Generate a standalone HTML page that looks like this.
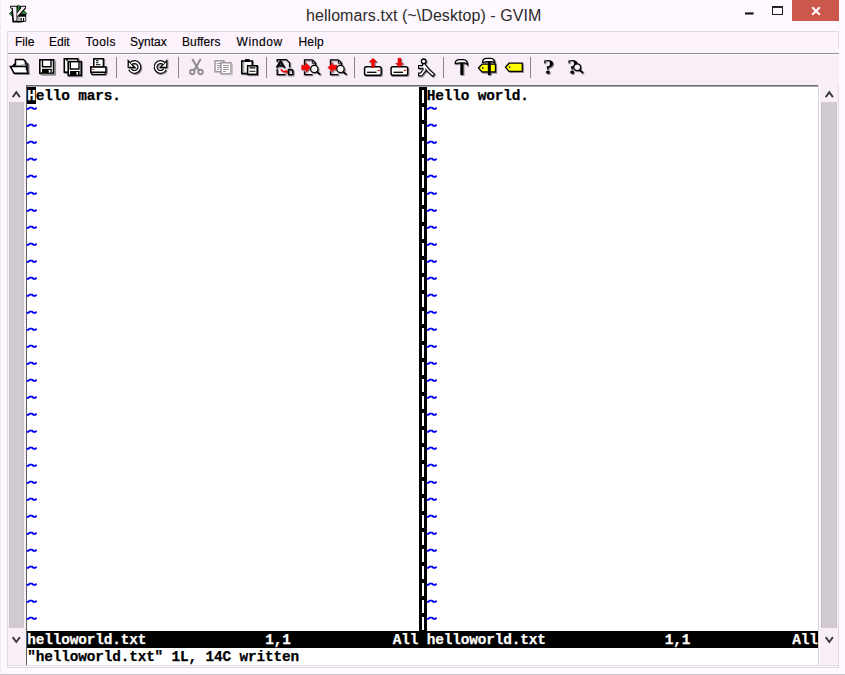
<!DOCTYPE html><html><head><meta charset="utf-8"><style>
*{margin:0;padding:0;box-sizing:border-box}
html,body{width:845px;height:675px;overflow:hidden;background:#fff8ff;position:relative;font-family:"Liberation Sans",sans-serif}
.a{position:absolute}
.m{position:absolute;font-family:"Liberation Mono",monospace;font-weight:bold;font-size:14.4px;letter-spacing:-0.14px;line-height:17px;white-space:pre;color:#000;-webkit-text-stroke:0.25px currentColor}
.menu span{position:absolute;top:35px;font-size:12px;line-height:14px;color:#000;-webkit-text-stroke:0.15px #000}
</style></head><body>
<div class="a" style="left:0;top:0;width:1px;height:675px;background:#f3edf3"></div>
<svg class="a" style="left:0;top:0" width="32" height="28" viewBox="0 0 32 28">
<polygon points="18.6,5 26.8,13.6 18.6,22.6 9.3,13.6" fill="#2c7a31" stroke="#123d16" stroke-width="0.7"/>
<polygon points="10.2,5.8 17.8,5.8 17.8,8.4 17.2,8.4 17.2,12.2 19.8,8.4 19.8,5.8 26,5.8 26,8.4 20.5,14 26.2,14 26.2,21.4 21,22.6 12.4,22.6 11.6,8.4 10.2,8.4" fill="#000"/>
<polygon points="11,6.7 16.5,6.7 16.5,20.8 14,20.8 12.7,7.7 11,7.7" fill="#f5f0f5"/>
<polygon points="20.9,6.7 25.2,6.7 25.2,7.6 17.3,16.2 17,13.4 21.6,7.7 20.9,7.7" fill="#f5f0f5"/>
<path d="M18.1 21V16.6M19.9 21V17.3H24.8V21M22.35 17.3V21" stroke="#fff" stroke-width="1.2" fill="none"/>
</svg>
<div class="a" style="left:306px;top:6px;font-size:16px;line-height:19px;color:#2b2b2b;white-space:pre;letter-spacing:0.06px">hellomars.txt (~\Desktop) - GVIM</div>
<div class="a" style="left:792px;top:0;width:47px;height:21px;background:#cc574c"></div>
<svg class="a" style="left:810px;top:6px" width="12" height="10" viewBox="0 0 12 10"><path d="M2.2 1.2L9.8 8.8M9.8 1.2L2.2 8.8" stroke="#fff" stroke-width="2.1"/></svg>
<svg class="a" style="left:740px;top:0" width="20" height="20"><rect x="5" y="12.4" width="8.6" height="2.1" fill="#111"/></svg>
<div class="a" style="left:772px;top:6px;width:11px;height:9px;border:1px solid #222;border-top-width:2px"></div>
<div class="a" style="left:7px;top:31px;width:832px;height:637px;border:1px solid #e0d8e0;background:#fdf3fd"></div>
<div class="a" style="left:8px;top:49px;width:831px;height:4px;background:#faf3fa"></div><div class="a" style="left:8px;top:53px;width:831px;height:1px;background:#938e93"></div><div class="a" style="left:8px;top:54px;width:831px;height:1px;background:#fffcff"></div>
<div class="a" style="left:8px;top:55px;width:831px;height:30px;background:#f8eef8"></div>
<div class="menu"><span style="left:15px;letter-spacing:0px">File</span><span style="left:49px;letter-spacing:0px">Edit</span><span style="left:85.5px;letter-spacing:0.5px">Tools</span><span style="left:130px;letter-spacing:0px">Syntax</span><span style="left:182px;letter-spacing:0.1px">Buffers</span><span style="left:236.5px;letter-spacing:0.6px">Window</span><span style="left:298.5px;letter-spacing:0.2px">Help</span></div>
<div class="a" style="left:115.5px;top:57px;width:1.6px;height:21px;background:#8a858a"></div>
<div class="a" style="left:177.5px;top:57px;width:1.6px;height:21px;background:#8a858a"></div>
<div class="a" style="left:265.5px;top:57px;width:1.6px;height:21px;background:#8a858a"></div>
<div class="a" style="left:353.5px;top:57px;width:1.6px;height:21px;background:#8a858a"></div>
<div class="a" style="left:442.5px;top:57px;width:1.6px;height:21px;background:#8a858a"></div>
<div class="a" style="left:529.5px;top:57px;width:1.6px;height:21px;background:#8a858a"></div>
<svg class="a" style="left:0;top:0" width="600" height="85" viewBox="0 0 600 85" stroke-linejoin="miter"><defs><filter id="sh" x="-20%" y="-20%" width="150%" height="150%"><feDropShadow dx="0.9" dy="0.9" stdDeviation="0.25" flood-color="#6a666a" flood-opacity="0.85"/></filter></defs><g filter="url(#sh)">
<!-- open -->
<path d="M15.5 65.5V59.5H23.5L25.5 61.5V64" fill="#fff" stroke="#000" stroke-width="1.5"/>
<polygon points="24.5,61.5 28.5,63.5 28.5,73.5 26,67" fill="#222"/>
<polygon points="12,65.5 15,62.8 15.5,66.5" fill="#000"/>
<polygon points="10.5,66.5 26,66.5 28,73.2 14,73.2" fill="#fff" stroke="#000" stroke-width="1.6"/>
<!-- save -->
<rect x="39.8" y="59.8" width="13.8" height="13.4" fill="#fff" stroke="#000" stroke-width="1.6"/>
<path d="M42.5 59.8V66.8H51V59.8" fill="none" stroke="#000" stroke-width="1.4"/>
<rect x="42" y="68.8" width="9.8" height="4.4" fill="#000"/>
<rect x="48.8" y="70" width="1.7" height="2.6" fill="#fff"/>
<path d="M54.6 60.5V74.2H40.5" fill="none" stroke="#888" stroke-width="1"/>
<!-- save all -->
<rect x="64.3" y="58.8" width="13.6" height="13.4" fill="#fff" stroke="#000" stroke-width="1.6"/>
<path d="M67 58.8V61" fill="none" stroke="#000" stroke-width="1.4"/>
<rect x="68.2" y="61.6" width="13" height="13.8" fill="#fff" stroke="#000" stroke-width="1.6"/>
<path d="M70.3 61.6V69H79V61.6" fill="none" stroke="#000" stroke-width="1.4"/>
<rect x="70" y="71" width="9.6" height="4.4" fill="#000"/>
<rect x="76.4" y="72" width="1.6" height="2.6" fill="#fff"/>
<!-- print -->
<rect x="93.8" y="58.8" width="9.6" height="8.5" fill="#fff" stroke="#000" stroke-width="1.5"/>
<path d="M96 60.7H98.5M96 62.6H98.5M96 64.6H100.5" stroke="#333" stroke-width="1.2"/>
<rect x="90.8" y="67" width="15.2" height="5.4" fill="#fff" stroke="#000" stroke-width="1.6"/>
<rect x="92.3" y="69" width="2" height="1" fill="#c0303a"/>
<rect x="91.8" y="72.4" width="13.4" height="2" fill="#fff" stroke="#000" stroke-width="1.2"/>
<!-- undo -->
<path d="M131.04 63.54A4.9 4.9 0 1 1 130.06 69.07" fill="none" stroke="#000" stroke-width="4"/>
<polygon points="128.2,60.6 128.2,67.4 134.6,67.4" fill="#fff" stroke="#000" stroke-width="1.3" stroke-linejoin="miter"/>
<path d="M131.04 63.54A4.9 4.9 0 1 1 130.06 69.07" fill="none" stroke="#fff" stroke-width="1.6"/>
<!-- redo -->
<path d="M163.96 63.54A4.9 4.9 0 1 0 164.94 69.07" fill="none" stroke="#000" stroke-width="4"/>
<polygon points="166.8,60.6 166.8,67.4 160.4,67.4" fill="#fff" stroke="#000" stroke-width="1.3" stroke-linejoin="miter"/>
<path d="M163.96 63.54A4.9 4.9 0 1 0 164.94 69.07" fill="none" stroke="#fff" stroke-width="1.6"/>
</g><!-- cut (disabled) -->
<path d="M192.3 59L198.8 70.2M200.7 59L194.2 70.2" stroke="#8f8a8f" stroke-width="2"/>
<circle cx="192.3" cy="72" r="2.2" fill="#fbf7fb" stroke="#8f8a8f" stroke-width="1.9"/>
<circle cx="200.5" cy="72" r="2.2" fill="#fbf7fb" stroke="#8f8a8f" stroke-width="1.9"/>
<!-- copy (disabled) -->
<rect x="215" y="60.8" width="9" height="11" fill="#fbf8fb" stroke="#969196" stroke-width="1.4"/>
<path d="M217 63.5H222M217 65.5H222M217 67.5H222M217 69.5H219" stroke="#9e999e" stroke-width="1"/>
<rect x="221" y="62.8" width="10" height="11" fill="#fff" stroke="#969196" stroke-width="1.4"/>
<path d="M223 65.5H229M223 67.5H229M223 69.5H229M223 71.5H226" stroke="#9e999e" stroke-width="1"/>
<path d="M232.3 63.8V74.8H222" fill="none" stroke="#c4bfc4" stroke-width="1"/>
<g filter="url(#sh)"><!-- paste -->
<rect x="241.8" y="61" width="10.5" height="12.5" fill="#fff" stroke="#000" stroke-width="1.6"/>
<path d="M243.8 62V73" stroke="#888" stroke-width="1"/>
<rect x="244.8" y="59" width="5" height="3" rx="1" fill="#000"/>
<rect x="247.6" y="65.8" width="9.6" height="8.6" fill="#fff" stroke="#000" stroke-width="1.6"/>
<path d="M249.6 67.9H255.4M249.6 71.3H255.4" stroke="#000" stroke-width="1.1"/>
<!-- replace -->
<path d="M277.2 62V59.6H286.3L289.6 62.8V67.5" fill="none" stroke="#000" stroke-width="1.4"/>
<path d="M277.2 69V74.6H285.5" fill="none" stroke="#000" stroke-width="1.4"/>
<path d="M276.6 67.8L280.6 61.3L284.6 67.8M278.5 65.6H282.7" fill="none" stroke="#000" stroke-width="2.1"/>
<path d="M280.8 69.2L283 71.6H286.3" fill="none" stroke="#e00" stroke-width="1.5"/>
<polygon points="285.6,69.4 288.2,71.6 285.6,74.2" fill="#e00"/>
<path d="M288.5 69.6H291.5Q293 69.6 293 71.3Q293 72.2 292 72.2Q293.2 72.4 293.2 73.4Q293.2 74.8 291.6 74.8H288.5Z" fill="none" stroke="#000" stroke-width="1.6"/>
<!-- find next -->
<path d="M304.5 65V59.8H312.3L315.6 63.1V66M304.5 71.2V74.6H312.5" fill="none" stroke="#000" stroke-width="1.3"/>
<rect x="312.3" y="61.2" width="2" height="2" fill="#fff" stroke="#000" stroke-width="0.9"/>
<polygon points="301.6,65.2 305.8,65.2 305.8,62.5 310.6,67.5 305.8,72.4 305.8,69.8 301.6,69.8" fill="#ff0000" stroke="#b00" stroke-width="0.5"/>
<circle cx="314.3" cy="69" r="3.7" fill="#f8f8f8" stroke="#000" stroke-width="1.3"/>
<path d="M317 71.8L320.3 74.6" stroke="#000" stroke-width="1.9"/>
<!-- find prev -->
<path d="M330.5 65V59.8H338.3L341.6 63.1V66M330.5 71.2V74.6H338.5" fill="none" stroke="#000" stroke-width="1.3"/>
<rect x="338.3" y="61.2" width="2" height="2" fill="#fff" stroke="#000" stroke-width="0.9"/>
<polygon points="337,65.2 332.8,65.2 332.8,62.5 328,67.5 332.8,72.4 332.8,69.8 337,69.8" fill="#ff0000" stroke="#b00" stroke-width="0.5"/>
<circle cx="340.5" cy="69" r="3.7" fill="#f8f8f8" stroke="#000" stroke-width="1.3"/>
<path d="M343.2 71.8L346.5 74.6" stroke="#000" stroke-width="1.9"/>
<!-- load session -->
<rect x="364.6" y="66.8" width="16.6" height="8.4" rx="1.8" fill="#fff" stroke="#000" stroke-width="1.5"/>
<path d="M367 72.3H376.5" stroke="#000" stroke-width="1.3"/>
<path d="M377.5 70.4H379.8" stroke="#e00" stroke-width="1.1"/>
<polygon points="373,58.2 376.9,62 374.5,62 374.5,67.5 371.5,67.5 371.5,62 369.1,62" fill="#f00" stroke="#a00" stroke-width="0.5"/>
<!-- save session -->
<rect x="391.1" y="66.8" width="16.6" height="8.4" rx="1.8" fill="#fff" stroke="#000" stroke-width="1.5"/>
<path d="M393.5 72.3H403" stroke="#000" stroke-width="1.3"/>
<path d="M404 70.4H406.3" stroke="#e00" stroke-width="1.1"/>
<polygon points="399.5,67.3 403.4,63.2 401,63.2 401,58.2 398,58.2 398,63.2 395.6,63.2" fill="#f00" stroke="#a00" stroke-width="0.5"/>
<!-- run script -->
<path d="M420 67H424M424 65.2L424.6 70M424.6 70L421.2 74.4H420M424.3 65.5L428.2 70.3L432.6 74.4" fill="none" stroke="#000" stroke-width="4" stroke-linecap="square" stroke-linejoin="round"/>
<path d="M420 67H424M424 65.2L424.6 70M424.6 70L421.2 74.4H420M424.3 65.5L428.2 70.3L432.6 74.4" fill="none" stroke="#fff" stroke-width="1.7" stroke-linecap="square" stroke-linejoin="round"/>
<circle cx="423.7" cy="61.3" r="2.3" fill="#fff" stroke="#000" stroke-width="1.4"/>
<!-- make -->
<path d="M455.2 63.6C455.2 60.6 457 59.6 459.5 59.6H463.5C466 59.6 467.6 61.5 467.4 64.6C466.4 63.2 465 62.8 463.5 63H459.5C457.5 63 456.5 63.6 455.2 63.6Z" fill="#fff" stroke="#000" stroke-width="1.4"/>
<rect x="460.3" y="63" width="3.2" height="12" fill="#000"/>
<!-- make tags -->
<polygon points="478.5,68 482,64.2 495.5,64.2 495.5,72 482,72" fill="#ff0" stroke="#000" stroke-width="1.3"/>
<circle cx="482.8" cy="68" r="0.9" fill="#333"/>
<path d="M482.5 62.4C482.5 59.4 484.3 58.4 486.8 58.4H490.8C493.3 58.4 494.9 60.3 494.7 63.4C493.7 62 492.3 61.6 490.8 61.8H486.8C484.8 61.8 483.8 62.4 482.5 62.4Z" fill="#fff" stroke="#000" stroke-width="1.4"/>
<rect x="487.8" y="61.8" width="3" height="13.2" fill="#000"/>
<!-- tag -->
<polygon points="505.5,67.2 509,63.2 522.3,63.2 522.3,71.3 509,71.3" fill="#ff0" stroke="#000" stroke-width="1.3"/>
<circle cx="509.6" cy="67.2" r="0.9" fill="#333"/>
<!-- help -->
<text x="542.8" y="74" font-family="Liberation Serif" font-weight="bold" font-size="19px" transform="translate(542.8 74) scale(1.25 1.08) translate(-542.8 -74)" fill="#000">?</text>
<!-- find help -->
<text x="567" y="74" font-family="Liberation Serif" font-weight="bold" font-size="19px" transform="translate(567 74) scale(1.25 1.08) translate(-567 -74)" fill="#000">?</text>
<circle cx="577.2" cy="67.3" r="3.4" fill="#f6f0f6" stroke="#000" stroke-width="1.3"/>
<path d="M579.5 69.8L583 73" stroke="#000" stroke-width="2"/>
</g></svg>
<div class="a" style="left:25px;top:85px;width:795px;height:580px;background:#fff"></div>
<div class="a" style="left:26px;top:85px;width:792px;height:1px;background:#6f6b6f"></div>
<div class="a" style="left:26px;top:86px;width:792px;height:1px;background:#a9a5a9"></div>
<div class="a" style="left:25px;top:85px;width:1px;height:580px;background:#f4f0f4"></div>
<div class="a" style="left:26px;top:85px;width:1px;height:580px;background:#605c60"></div>
<div class="a" style="left:818px;top:85px;width:1px;height:580px;background:#d8d2d8"></div>
<div class="a" style="left:8px;top:85px;width:17px;height:581px;background:#f8eff8"></div>
<div class="a" style="left:9px;top:102px;width:15px;height:526px;background:#d1cad1;border-left:1px solid #c9c2c9;border-right:1px solid #cac3ca"></div>
<svg class="a" style="left:11px;top:89px" width="10" height="10" viewBox="0 0 10 10"><path d="M1.7 8.1L5.3 3.2L8.9 8.1" fill="none" stroke="#3a3a3a" stroke-width="1.9"/></svg>
<svg class="a" style="left:11px;top:634.5px" width="10" height="10" viewBox="0 0 10 10"><path d="M1.7 2.1L5.3 7L8.9 2.1" fill="none" stroke="#3a3a3a" stroke-width="1.9"/></svg>
<div class="a" style="left:820px;top:85px;width:18px;height:581px;background:#f8eff8"></div>
<div class="a" style="left:821px;top:102px;width:16px;height:526px;background:#d1cad1;border-left:1px solid #c9c2c9;border-right:1px solid #cac3ca"></div>
<svg class="a" style="left:824px;top:89px" width="10" height="10" viewBox="0 0 10 10"><path d="M1.7 8.1L5.3 3.2L8.9 8.1" fill="none" stroke="#3a3a3a" stroke-width="1.9"/></svg>
<svg class="a" style="left:824px;top:634.5px" width="10" height="10" viewBox="0 0 10 10"><path d="M1.7 2.1L5.3 7L8.9 2.1" fill="none" stroke="#3a3a3a" stroke-width="1.9"/></svg>
<div class="a" style="left:27px;top:87px;width:9px;height:17px;background:#000"></div>
<div class="m" style="left:27.20px;top:88px;color:#000"><span style="color:#fff">H</span>ello mars.</div>
<div class="m" style="left:426.70px;top:88px;color:#000">Hello world.</div>
<svg class="a" style="left:27.20px;top:106.2px" width="9" height="4" viewBox="0 0 9 4" overflow="visible"><path d="M-0.3 2.9H1.3L2.6 1.6H5.2L6.4 2.9H8.3L9.5 1.6" fill="none" stroke="#0000ff" stroke-width="1.9" stroke-linejoin="round"/></svg>
<svg class="a" style="left:426.70px;top:106.2px" width="9" height="4" viewBox="0 0 9 4" overflow="visible"><path d="M-0.3 2.9H1.3L2.6 1.6H5.2L6.4 2.9H8.3L9.5 1.6" fill="none" stroke="#0000ff" stroke-width="1.9" stroke-linejoin="round"/></svg>
<svg class="a" style="left:27.20px;top:123.2px" width="9" height="4" viewBox="0 0 9 4" overflow="visible"><path d="M-0.3 2.9H1.3L2.6 1.6H5.2L6.4 2.9H8.3L9.5 1.6" fill="none" stroke="#0000ff" stroke-width="1.9" stroke-linejoin="round"/></svg>
<svg class="a" style="left:426.70px;top:123.2px" width="9" height="4" viewBox="0 0 9 4" overflow="visible"><path d="M-0.3 2.9H1.3L2.6 1.6H5.2L6.4 2.9H8.3L9.5 1.6" fill="none" stroke="#0000ff" stroke-width="1.9" stroke-linejoin="round"/></svg>
<svg class="a" style="left:27.20px;top:140.2px" width="9" height="4" viewBox="0 0 9 4" overflow="visible"><path d="M-0.3 2.9H1.3L2.6 1.6H5.2L6.4 2.9H8.3L9.5 1.6" fill="none" stroke="#0000ff" stroke-width="1.9" stroke-linejoin="round"/></svg>
<svg class="a" style="left:426.70px;top:140.2px" width="9" height="4" viewBox="0 0 9 4" overflow="visible"><path d="M-0.3 2.9H1.3L2.6 1.6H5.2L6.4 2.9H8.3L9.5 1.6" fill="none" stroke="#0000ff" stroke-width="1.9" stroke-linejoin="round"/></svg>
<svg class="a" style="left:27.20px;top:157.2px" width="9" height="4" viewBox="0 0 9 4" overflow="visible"><path d="M-0.3 2.9H1.3L2.6 1.6H5.2L6.4 2.9H8.3L9.5 1.6" fill="none" stroke="#0000ff" stroke-width="1.9" stroke-linejoin="round"/></svg>
<svg class="a" style="left:426.70px;top:157.2px" width="9" height="4" viewBox="0 0 9 4" overflow="visible"><path d="M-0.3 2.9H1.3L2.6 1.6H5.2L6.4 2.9H8.3L9.5 1.6" fill="none" stroke="#0000ff" stroke-width="1.9" stroke-linejoin="round"/></svg>
<svg class="a" style="left:27.20px;top:174.2px" width="9" height="4" viewBox="0 0 9 4" overflow="visible"><path d="M-0.3 2.9H1.3L2.6 1.6H5.2L6.4 2.9H8.3L9.5 1.6" fill="none" stroke="#0000ff" stroke-width="1.9" stroke-linejoin="round"/></svg>
<svg class="a" style="left:426.70px;top:174.2px" width="9" height="4" viewBox="0 0 9 4" overflow="visible"><path d="M-0.3 2.9H1.3L2.6 1.6H5.2L6.4 2.9H8.3L9.5 1.6" fill="none" stroke="#0000ff" stroke-width="1.9" stroke-linejoin="round"/></svg>
<svg class="a" style="left:27.20px;top:191.2px" width="9" height="4" viewBox="0 0 9 4" overflow="visible"><path d="M-0.3 2.9H1.3L2.6 1.6H5.2L6.4 2.9H8.3L9.5 1.6" fill="none" stroke="#0000ff" stroke-width="1.9" stroke-linejoin="round"/></svg>
<svg class="a" style="left:426.70px;top:191.2px" width="9" height="4" viewBox="0 0 9 4" overflow="visible"><path d="M-0.3 2.9H1.3L2.6 1.6H5.2L6.4 2.9H8.3L9.5 1.6" fill="none" stroke="#0000ff" stroke-width="1.9" stroke-linejoin="round"/></svg>
<svg class="a" style="left:27.20px;top:208.2px" width="9" height="4" viewBox="0 0 9 4" overflow="visible"><path d="M-0.3 2.9H1.3L2.6 1.6H5.2L6.4 2.9H8.3L9.5 1.6" fill="none" stroke="#0000ff" stroke-width="1.9" stroke-linejoin="round"/></svg>
<svg class="a" style="left:426.70px;top:208.2px" width="9" height="4" viewBox="0 0 9 4" overflow="visible"><path d="M-0.3 2.9H1.3L2.6 1.6H5.2L6.4 2.9H8.3L9.5 1.6" fill="none" stroke="#0000ff" stroke-width="1.9" stroke-linejoin="round"/></svg>
<svg class="a" style="left:27.20px;top:225.2px" width="9" height="4" viewBox="0 0 9 4" overflow="visible"><path d="M-0.3 2.9H1.3L2.6 1.6H5.2L6.4 2.9H8.3L9.5 1.6" fill="none" stroke="#0000ff" stroke-width="1.9" stroke-linejoin="round"/></svg>
<svg class="a" style="left:426.70px;top:225.2px" width="9" height="4" viewBox="0 0 9 4" overflow="visible"><path d="M-0.3 2.9H1.3L2.6 1.6H5.2L6.4 2.9H8.3L9.5 1.6" fill="none" stroke="#0000ff" stroke-width="1.9" stroke-linejoin="round"/></svg>
<svg class="a" style="left:27.20px;top:242.2px" width="9" height="4" viewBox="0 0 9 4" overflow="visible"><path d="M-0.3 2.9H1.3L2.6 1.6H5.2L6.4 2.9H8.3L9.5 1.6" fill="none" stroke="#0000ff" stroke-width="1.9" stroke-linejoin="round"/></svg>
<svg class="a" style="left:426.70px;top:242.2px" width="9" height="4" viewBox="0 0 9 4" overflow="visible"><path d="M-0.3 2.9H1.3L2.6 1.6H5.2L6.4 2.9H8.3L9.5 1.6" fill="none" stroke="#0000ff" stroke-width="1.9" stroke-linejoin="round"/></svg>
<svg class="a" style="left:27.20px;top:259.2px" width="9" height="4" viewBox="0 0 9 4" overflow="visible"><path d="M-0.3 2.9H1.3L2.6 1.6H5.2L6.4 2.9H8.3L9.5 1.6" fill="none" stroke="#0000ff" stroke-width="1.9" stroke-linejoin="round"/></svg>
<svg class="a" style="left:426.70px;top:259.2px" width="9" height="4" viewBox="0 0 9 4" overflow="visible"><path d="M-0.3 2.9H1.3L2.6 1.6H5.2L6.4 2.9H8.3L9.5 1.6" fill="none" stroke="#0000ff" stroke-width="1.9" stroke-linejoin="round"/></svg>
<svg class="a" style="left:27.20px;top:276.2px" width="9" height="4" viewBox="0 0 9 4" overflow="visible"><path d="M-0.3 2.9H1.3L2.6 1.6H5.2L6.4 2.9H8.3L9.5 1.6" fill="none" stroke="#0000ff" stroke-width="1.9" stroke-linejoin="round"/></svg>
<svg class="a" style="left:426.70px;top:276.2px" width="9" height="4" viewBox="0 0 9 4" overflow="visible"><path d="M-0.3 2.9H1.3L2.6 1.6H5.2L6.4 2.9H8.3L9.5 1.6" fill="none" stroke="#0000ff" stroke-width="1.9" stroke-linejoin="round"/></svg>
<svg class="a" style="left:27.20px;top:293.2px" width="9" height="4" viewBox="0 0 9 4" overflow="visible"><path d="M-0.3 2.9H1.3L2.6 1.6H5.2L6.4 2.9H8.3L9.5 1.6" fill="none" stroke="#0000ff" stroke-width="1.9" stroke-linejoin="round"/></svg>
<svg class="a" style="left:426.70px;top:293.2px" width="9" height="4" viewBox="0 0 9 4" overflow="visible"><path d="M-0.3 2.9H1.3L2.6 1.6H5.2L6.4 2.9H8.3L9.5 1.6" fill="none" stroke="#0000ff" stroke-width="1.9" stroke-linejoin="round"/></svg>
<svg class="a" style="left:27.20px;top:310.2px" width="9" height="4" viewBox="0 0 9 4" overflow="visible"><path d="M-0.3 2.9H1.3L2.6 1.6H5.2L6.4 2.9H8.3L9.5 1.6" fill="none" stroke="#0000ff" stroke-width="1.9" stroke-linejoin="round"/></svg>
<svg class="a" style="left:426.70px;top:310.2px" width="9" height="4" viewBox="0 0 9 4" overflow="visible"><path d="M-0.3 2.9H1.3L2.6 1.6H5.2L6.4 2.9H8.3L9.5 1.6" fill="none" stroke="#0000ff" stroke-width="1.9" stroke-linejoin="round"/></svg>
<svg class="a" style="left:27.20px;top:327.2px" width="9" height="4" viewBox="0 0 9 4" overflow="visible"><path d="M-0.3 2.9H1.3L2.6 1.6H5.2L6.4 2.9H8.3L9.5 1.6" fill="none" stroke="#0000ff" stroke-width="1.9" stroke-linejoin="round"/></svg>
<svg class="a" style="left:426.70px;top:327.2px" width="9" height="4" viewBox="0 0 9 4" overflow="visible"><path d="M-0.3 2.9H1.3L2.6 1.6H5.2L6.4 2.9H8.3L9.5 1.6" fill="none" stroke="#0000ff" stroke-width="1.9" stroke-linejoin="round"/></svg>
<svg class="a" style="left:27.20px;top:344.2px" width="9" height="4" viewBox="0 0 9 4" overflow="visible"><path d="M-0.3 2.9H1.3L2.6 1.6H5.2L6.4 2.9H8.3L9.5 1.6" fill="none" stroke="#0000ff" stroke-width="1.9" stroke-linejoin="round"/></svg>
<svg class="a" style="left:426.70px;top:344.2px" width="9" height="4" viewBox="0 0 9 4" overflow="visible"><path d="M-0.3 2.9H1.3L2.6 1.6H5.2L6.4 2.9H8.3L9.5 1.6" fill="none" stroke="#0000ff" stroke-width="1.9" stroke-linejoin="round"/></svg>
<svg class="a" style="left:27.20px;top:361.2px" width="9" height="4" viewBox="0 0 9 4" overflow="visible"><path d="M-0.3 2.9H1.3L2.6 1.6H5.2L6.4 2.9H8.3L9.5 1.6" fill="none" stroke="#0000ff" stroke-width="1.9" stroke-linejoin="round"/></svg>
<svg class="a" style="left:426.70px;top:361.2px" width="9" height="4" viewBox="0 0 9 4" overflow="visible"><path d="M-0.3 2.9H1.3L2.6 1.6H5.2L6.4 2.9H8.3L9.5 1.6" fill="none" stroke="#0000ff" stroke-width="1.9" stroke-linejoin="round"/></svg>
<svg class="a" style="left:27.20px;top:378.2px" width="9" height="4" viewBox="0 0 9 4" overflow="visible"><path d="M-0.3 2.9H1.3L2.6 1.6H5.2L6.4 2.9H8.3L9.5 1.6" fill="none" stroke="#0000ff" stroke-width="1.9" stroke-linejoin="round"/></svg>
<svg class="a" style="left:426.70px;top:378.2px" width="9" height="4" viewBox="0 0 9 4" overflow="visible"><path d="M-0.3 2.9H1.3L2.6 1.6H5.2L6.4 2.9H8.3L9.5 1.6" fill="none" stroke="#0000ff" stroke-width="1.9" stroke-linejoin="round"/></svg>
<svg class="a" style="left:27.20px;top:395.2px" width="9" height="4" viewBox="0 0 9 4" overflow="visible"><path d="M-0.3 2.9H1.3L2.6 1.6H5.2L6.4 2.9H8.3L9.5 1.6" fill="none" stroke="#0000ff" stroke-width="1.9" stroke-linejoin="round"/></svg>
<svg class="a" style="left:426.70px;top:395.2px" width="9" height="4" viewBox="0 0 9 4" overflow="visible"><path d="M-0.3 2.9H1.3L2.6 1.6H5.2L6.4 2.9H8.3L9.5 1.6" fill="none" stroke="#0000ff" stroke-width="1.9" stroke-linejoin="round"/></svg>
<svg class="a" style="left:27.20px;top:412.2px" width="9" height="4" viewBox="0 0 9 4" overflow="visible"><path d="M-0.3 2.9H1.3L2.6 1.6H5.2L6.4 2.9H8.3L9.5 1.6" fill="none" stroke="#0000ff" stroke-width="1.9" stroke-linejoin="round"/></svg>
<svg class="a" style="left:426.70px;top:412.2px" width="9" height="4" viewBox="0 0 9 4" overflow="visible"><path d="M-0.3 2.9H1.3L2.6 1.6H5.2L6.4 2.9H8.3L9.5 1.6" fill="none" stroke="#0000ff" stroke-width="1.9" stroke-linejoin="round"/></svg>
<svg class="a" style="left:27.20px;top:429.2px" width="9" height="4" viewBox="0 0 9 4" overflow="visible"><path d="M-0.3 2.9H1.3L2.6 1.6H5.2L6.4 2.9H8.3L9.5 1.6" fill="none" stroke="#0000ff" stroke-width="1.9" stroke-linejoin="round"/></svg>
<svg class="a" style="left:426.70px;top:429.2px" width="9" height="4" viewBox="0 0 9 4" overflow="visible"><path d="M-0.3 2.9H1.3L2.6 1.6H5.2L6.4 2.9H8.3L9.5 1.6" fill="none" stroke="#0000ff" stroke-width="1.9" stroke-linejoin="round"/></svg>
<svg class="a" style="left:27.20px;top:446.2px" width="9" height="4" viewBox="0 0 9 4" overflow="visible"><path d="M-0.3 2.9H1.3L2.6 1.6H5.2L6.4 2.9H8.3L9.5 1.6" fill="none" stroke="#0000ff" stroke-width="1.9" stroke-linejoin="round"/></svg>
<svg class="a" style="left:426.70px;top:446.2px" width="9" height="4" viewBox="0 0 9 4" overflow="visible"><path d="M-0.3 2.9H1.3L2.6 1.6H5.2L6.4 2.9H8.3L9.5 1.6" fill="none" stroke="#0000ff" stroke-width="1.9" stroke-linejoin="round"/></svg>
<svg class="a" style="left:27.20px;top:463.2px" width="9" height="4" viewBox="0 0 9 4" overflow="visible"><path d="M-0.3 2.9H1.3L2.6 1.6H5.2L6.4 2.9H8.3L9.5 1.6" fill="none" stroke="#0000ff" stroke-width="1.9" stroke-linejoin="round"/></svg>
<svg class="a" style="left:426.70px;top:463.2px" width="9" height="4" viewBox="0 0 9 4" overflow="visible"><path d="M-0.3 2.9H1.3L2.6 1.6H5.2L6.4 2.9H8.3L9.5 1.6" fill="none" stroke="#0000ff" stroke-width="1.9" stroke-linejoin="round"/></svg>
<svg class="a" style="left:27.20px;top:480.2px" width="9" height="4" viewBox="0 0 9 4" overflow="visible"><path d="M-0.3 2.9H1.3L2.6 1.6H5.2L6.4 2.9H8.3L9.5 1.6" fill="none" stroke="#0000ff" stroke-width="1.9" stroke-linejoin="round"/></svg>
<svg class="a" style="left:426.70px;top:480.2px" width="9" height="4" viewBox="0 0 9 4" overflow="visible"><path d="M-0.3 2.9H1.3L2.6 1.6H5.2L6.4 2.9H8.3L9.5 1.6" fill="none" stroke="#0000ff" stroke-width="1.9" stroke-linejoin="round"/></svg>
<svg class="a" style="left:27.20px;top:497.2px" width="9" height="4" viewBox="0 0 9 4" overflow="visible"><path d="M-0.3 2.9H1.3L2.6 1.6H5.2L6.4 2.9H8.3L9.5 1.6" fill="none" stroke="#0000ff" stroke-width="1.9" stroke-linejoin="round"/></svg>
<svg class="a" style="left:426.70px;top:497.2px" width="9" height="4" viewBox="0 0 9 4" overflow="visible"><path d="M-0.3 2.9H1.3L2.6 1.6H5.2L6.4 2.9H8.3L9.5 1.6" fill="none" stroke="#0000ff" stroke-width="1.9" stroke-linejoin="round"/></svg>
<svg class="a" style="left:27.20px;top:514.2px" width="9" height="4" viewBox="0 0 9 4" overflow="visible"><path d="M-0.3 2.9H1.3L2.6 1.6H5.2L6.4 2.9H8.3L9.5 1.6" fill="none" stroke="#0000ff" stroke-width="1.9" stroke-linejoin="round"/></svg>
<svg class="a" style="left:426.70px;top:514.2px" width="9" height="4" viewBox="0 0 9 4" overflow="visible"><path d="M-0.3 2.9H1.3L2.6 1.6H5.2L6.4 2.9H8.3L9.5 1.6" fill="none" stroke="#0000ff" stroke-width="1.9" stroke-linejoin="round"/></svg>
<svg class="a" style="left:27.20px;top:531.2px" width="9" height="4" viewBox="0 0 9 4" overflow="visible"><path d="M-0.3 2.9H1.3L2.6 1.6H5.2L6.4 2.9H8.3L9.5 1.6" fill="none" stroke="#0000ff" stroke-width="1.9" stroke-linejoin="round"/></svg>
<svg class="a" style="left:426.70px;top:531.2px" width="9" height="4" viewBox="0 0 9 4" overflow="visible"><path d="M-0.3 2.9H1.3L2.6 1.6H5.2L6.4 2.9H8.3L9.5 1.6" fill="none" stroke="#0000ff" stroke-width="1.9" stroke-linejoin="round"/></svg>
<svg class="a" style="left:27.20px;top:548.2px" width="9" height="4" viewBox="0 0 9 4" overflow="visible"><path d="M-0.3 2.9H1.3L2.6 1.6H5.2L6.4 2.9H8.3L9.5 1.6" fill="none" stroke="#0000ff" stroke-width="1.9" stroke-linejoin="round"/></svg>
<svg class="a" style="left:426.70px;top:548.2px" width="9" height="4" viewBox="0 0 9 4" overflow="visible"><path d="M-0.3 2.9H1.3L2.6 1.6H5.2L6.4 2.9H8.3L9.5 1.6" fill="none" stroke="#0000ff" stroke-width="1.9" stroke-linejoin="round"/></svg>
<svg class="a" style="left:27.20px;top:565.2px" width="9" height="4" viewBox="0 0 9 4" overflow="visible"><path d="M-0.3 2.9H1.3L2.6 1.6H5.2L6.4 2.9H8.3L9.5 1.6" fill="none" stroke="#0000ff" stroke-width="1.9" stroke-linejoin="round"/></svg>
<svg class="a" style="left:426.70px;top:565.2px" width="9" height="4" viewBox="0 0 9 4" overflow="visible"><path d="M-0.3 2.9H1.3L2.6 1.6H5.2L6.4 2.9H8.3L9.5 1.6" fill="none" stroke="#0000ff" stroke-width="1.9" stroke-linejoin="round"/></svg>
<svg class="a" style="left:27.20px;top:582.2px" width="9" height="4" viewBox="0 0 9 4" overflow="visible"><path d="M-0.3 2.9H1.3L2.6 1.6H5.2L6.4 2.9H8.3L9.5 1.6" fill="none" stroke="#0000ff" stroke-width="1.9" stroke-linejoin="round"/></svg>
<svg class="a" style="left:426.70px;top:582.2px" width="9" height="4" viewBox="0 0 9 4" overflow="visible"><path d="M-0.3 2.9H1.3L2.6 1.6H5.2L6.4 2.9H8.3L9.5 1.6" fill="none" stroke="#0000ff" stroke-width="1.9" stroke-linejoin="round"/></svg>
<svg class="a" style="left:27.20px;top:599.2px" width="9" height="4" viewBox="0 0 9 4" overflow="visible"><path d="M-0.3 2.9H1.3L2.6 1.6H5.2L6.4 2.9H8.3L9.5 1.6" fill="none" stroke="#0000ff" stroke-width="1.9" stroke-linejoin="round"/></svg>
<svg class="a" style="left:426.70px;top:599.2px" width="9" height="4" viewBox="0 0 9 4" overflow="visible"><path d="M-0.3 2.9H1.3L2.6 1.6H5.2L6.4 2.9H8.3L9.5 1.6" fill="none" stroke="#0000ff" stroke-width="1.9" stroke-linejoin="round"/></svg>
<svg class="a" style="left:27.20px;top:616.2px" width="9" height="4" viewBox="0 0 9 4" overflow="visible"><path d="M-0.3 2.9H1.3L2.6 1.6H5.2L6.4 2.9H8.3L9.5 1.6" fill="none" stroke="#0000ff" stroke-width="1.9" stroke-linejoin="round"/></svg>
<svg class="a" style="left:426.70px;top:616.2px" width="9" height="4" viewBox="0 0 9 4" overflow="visible"><path d="M-0.3 2.9H1.3L2.6 1.6H5.2L6.4 2.9H8.3L9.5 1.6" fill="none" stroke="#0000ff" stroke-width="1.9" stroke-linejoin="round"/></svg>
<div class="a" style="left:419px;top:87px;width:8px;height:544px;background:#000"></div>
<div class="a" style="left:421.5px;top:90px;width:2.5px;height:13px;background:#fff"></div>
<div class="a" style="left:421.5px;top:107px;width:2.5px;height:13px;background:#fff"></div>
<div class="a" style="left:421.5px;top:124px;width:2.5px;height:13px;background:#fff"></div>
<div class="a" style="left:421.5px;top:141px;width:2.5px;height:13px;background:#fff"></div>
<div class="a" style="left:421.5px;top:158px;width:2.5px;height:13px;background:#fff"></div>
<div class="a" style="left:421.5px;top:175px;width:2.5px;height:13px;background:#fff"></div>
<div class="a" style="left:421.5px;top:192px;width:2.5px;height:13px;background:#fff"></div>
<div class="a" style="left:421.5px;top:209px;width:2.5px;height:13px;background:#fff"></div>
<div class="a" style="left:421.5px;top:226px;width:2.5px;height:13px;background:#fff"></div>
<div class="a" style="left:421.5px;top:243px;width:2.5px;height:13px;background:#fff"></div>
<div class="a" style="left:421.5px;top:260px;width:2.5px;height:13px;background:#fff"></div>
<div class="a" style="left:421.5px;top:277px;width:2.5px;height:13px;background:#fff"></div>
<div class="a" style="left:421.5px;top:294px;width:2.5px;height:13px;background:#fff"></div>
<div class="a" style="left:421.5px;top:311px;width:2.5px;height:13px;background:#fff"></div>
<div class="a" style="left:421.5px;top:328px;width:2.5px;height:13px;background:#fff"></div>
<div class="a" style="left:421.5px;top:345px;width:2.5px;height:13px;background:#fff"></div>
<div class="a" style="left:421.5px;top:362px;width:2.5px;height:13px;background:#fff"></div>
<div class="a" style="left:421.5px;top:379px;width:2.5px;height:13px;background:#fff"></div>
<div class="a" style="left:421.5px;top:396px;width:2.5px;height:13px;background:#fff"></div>
<div class="a" style="left:421.5px;top:413px;width:2.5px;height:13px;background:#fff"></div>
<div class="a" style="left:421.5px;top:430px;width:2.5px;height:13px;background:#fff"></div>
<div class="a" style="left:421.5px;top:447px;width:2.5px;height:13px;background:#fff"></div>
<div class="a" style="left:421.5px;top:464px;width:2.5px;height:13px;background:#fff"></div>
<div class="a" style="left:421.5px;top:481px;width:2.5px;height:13px;background:#fff"></div>
<div class="a" style="left:421.5px;top:498px;width:2.5px;height:13px;background:#fff"></div>
<div class="a" style="left:421.5px;top:515px;width:2.5px;height:13px;background:#fff"></div>
<div class="a" style="left:421.5px;top:532px;width:2.5px;height:13px;background:#fff"></div>
<div class="a" style="left:421.5px;top:549px;width:2.5px;height:13px;background:#fff"></div>
<div class="a" style="left:421.5px;top:566px;width:2.5px;height:13px;background:#fff"></div>
<div class="a" style="left:421.5px;top:583px;width:2.5px;height:13px;background:#fff"></div>
<div class="a" style="left:421.5px;top:600px;width:2.5px;height:13px;background:#fff"></div>
<div class="a" style="left:421.5px;top:617px;width:2.5px;height:13px;background:#fff"></div>
<div class="a" style="left:27px;top:631px;width:791px;height:17px;background:#000"></div>
<div class="m" style="left:27.20px;top:632px;color:#fff">helloworld.txt</div>
<div class="m" style="left:265.20px;top:632px;color:#fff">1,1</div>
<div class="m" style="left:392.70px;top:632px;color:#fff">All</div>
<div class="m" style="left:426.70px;top:632px;color:#fff">helloworld.txt</div>
<div class="m" style="left:664.70px;top:632px;color:#fff">1,1</div>
<div class="m" style="left:792.20px;top:632px;color:#fff">All</div>
<div class="m" style="left:27.20px;top:649px;color:#000">"helloworld.txt" 1L, 14C written</div>
<div class="a" style="left:8px;top:665px;width:830px;height:1px;background:#e8e0e8"></div>
<div class="a" style="left:0;top:674px;width:845px;height:1px;background:#c9c3c9"></div>
</body></html>
